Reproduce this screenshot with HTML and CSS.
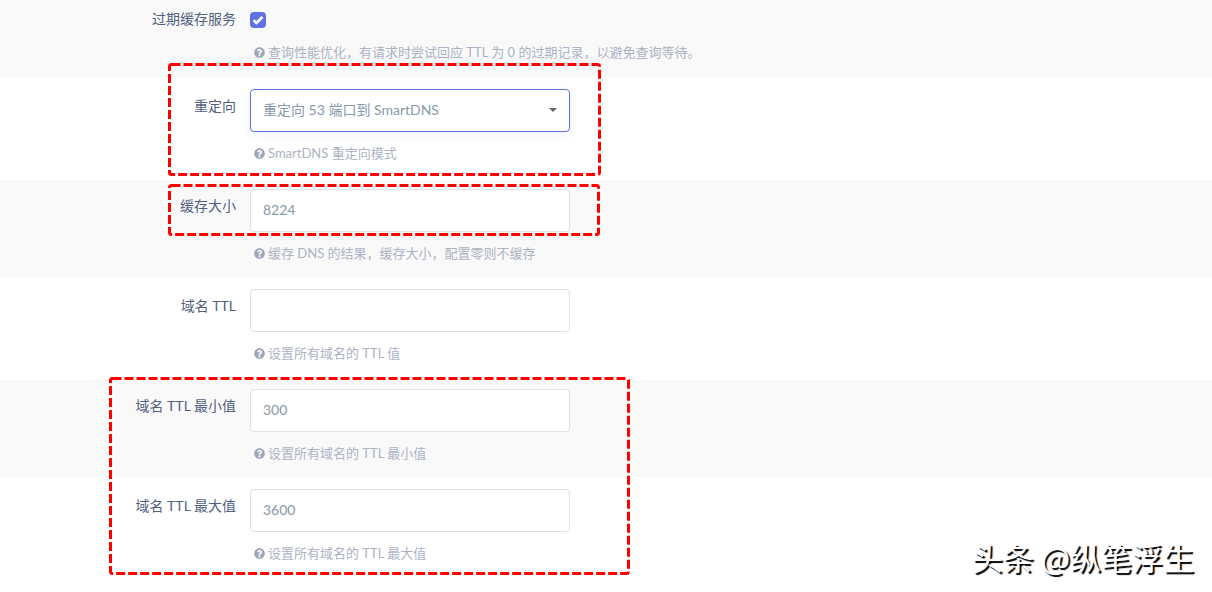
FILE: index.html
```
<!DOCTYPE html>
<html lang="zh-CN">
<head>
<meta charset="utf-8">
<title>SmartDNS</title>
<link rel="stylesheet" href="styles.css">
</head>
<body>
<svg class="sprite" aria-hidden="true">
  <symbol id="help" viewBox="0 0 512 512">
    <path fill="currentColor" d="M504 256c0 137-111 248-248 248S8 393 8 256 119 8 256 8s248 111 248 248zM262.700 90c-54.500 0-89.300 23-116.500 63.800-3.600 5.300-2.400 12.400 2.700 16.300l34.700 26.300c5.200 3.900 12.600 3 16.700-2.100 17.900-22.700 30.100-35.800 57.300-35.800 20.400 0 45.700 13.100 45.700 33 0 15-12.400 22.700-32.500 34C247.100 238.500 216 254.900 216 296v4c0 6.600 5.400 12 12 12h56c6.600 0 12-5.400 12-12v-1.300c0-28.500 83.200-29.600 83.200-106.700 0-58-60.200-102-116.500-102zM256 338c-25.400 0-46 20.600-46 46s20.600 46 46 46 46-20.600 46-46-20.600-46-46-46z"/>
  </symbol>
</svg>
<main class="page">
  <form class="form">
    <div class="row row-check">
      <label class="label" for="expired">过期缓存服务</label>
      <div class="field">
        <div class="check">
          <input class="check-input" type="checkbox" id="expired" checked>
          <svg class="check-mark" viewBox="0 0 16 16" aria-hidden="true"><path d="M3.600 8.200 6.500 11 12.400 5" fill="none" stroke="#fff" stroke-width="2.600"/></svg>
        </div>
        <p class="hint"><svg class="hint-icon" aria-hidden="true"><use href="#help"/></svg>查询性能优化，有请求时尝试回应 TTL 为 0 的过期记录，以避免查询等待。</p>
      </div>
    </div>
    <div class="row">
      <label class="label" for="redirect">重定向</label>
      <div class="field">
        <div class="select">
          <select class="control control-active" id="redirect"><option>重定向 53 端口到 SmartDNS</option></select>
          <svg class="select-arrow" viewBox="0 0 8 4" aria-hidden="true"><path d="M0 0h8L4 4z" fill="#666"/></svg>
        </div>
        <p class="hint"><svg class="hint-icon" aria-hidden="true"><use href="#help"/></svg>SmartDNS 重定向模式</p>
      </div>
    </div>
    <div class="row">
      <label class="label" for="cache">缓存大小</label>
      <div class="field">
        <input class="control" type="text" id="cache" value="8224">
        <p class="hint"><svg class="hint-icon" aria-hidden="true"><use href="#help"/></svg>缓存 DNS 的结果，缓存大小，配置零则不缓存</p>
      </div>
    </div>
    <div class="row">
      <label class="label" for="ttl">域名 TTL</label>
      <div class="field">
        <input class="control" type="text" id="ttl">
        <p class="hint"><svg class="hint-icon" aria-hidden="true"><use href="#help"/></svg>设置所有域名的 TTL 值</p>
      </div>
    </div>
    <div class="row">
      <label class="label" for="ttl-min">域名 TTL 最小值</label>
      <div class="field">
        <input class="control" type="text" id="ttl-min" value="300">
        <p class="hint"><svg class="hint-icon" aria-hidden="true"><use href="#help"/></svg>设置所有域名的 TTL 最小值</p>
      </div>
    </div>
    <div class="row">
      <label class="label" for="ttl-max">域名 TTL 最大值</label>
      <div class="field">
        <input class="control" type="text" id="ttl-max" value="3600">
        <p class="hint"><svg class="hint-icon" aria-hidden="true"><use href="#help"/></svg>设置所有域名的 TTL 最大值</p>
      </div>
    </div>
  </form>
  <svg class="marks" aria-hidden="true">
    <g fill="none" stroke="#f00" stroke-width="3" stroke-dasharray="9 3">
      <rect x="169.500" y="64.500" width="430" height="110" rx="2"/>
      <rect x="169.500" y="185.500" width="429" height="49" rx="2"/>
      <rect x="110.500" y="378.500" width="518" height="195" rx="2"/>
    </g>
  </svg>
  <div class="watermark">头条 @纵笔浮生</div>
</main>
</body>
</html>
```
FILE: styles.css
```
* { box-sizing: border-box; }

body {
  margin: 0;
  background: #fff;
  color: #525f7f;
  font-family: Lato, "Noto Sans CJK SC", sans-serif;
  font-size: 14px;
  font-weight: 400;
}

.sprite { position: absolute; width: 0; height: 0; }

.page { position: relative; min-height: 100vh; }

.row {
  display: flex;
  gap: 14px;
  padding: 12px 0;
}

.row:nth-child(odd) {
  padding: 9px 0;
  background: #f9f9f9;
}

.row.row-check { padding-bottom: 10px; }

.label {
  flex: 0 0 236px;
  padding-top: 7px;
  line-height: 20px;
  text-align: right;
}

.row-check .label { padding-top: 0; }

.field { flex: 1; min-width: 0; }

.control {
  display: block;
  width: 320px;
  height: 43px;
  padding: 0 12px 2px;
  appearance: none;
  border: 1px solid #dee2e6;
  border-radius: 4px;
  background: #fff;
  color: #8898aa;
  font: inherit;
}

.control-active {
  border-color: #5e72e4;
  box-shadow: 0 3px 9px rgba(50, 50, 200, 0.08);
}

.select { position: relative; width: 320px; }

.select-arrow {
  position: absolute;
  top: 19px;
  right: 13px;
  width: 8px;
  height: 4px;
  pointer-events: none;
}

.check {
  display: flex;
  position: relative;
  align-items: center;
  height: 22px;
}

.check-input {
  width: 16px;
  height: 16px;
  margin: 0;
  appearance: none;
  border-radius: 4px;
  background: #5e72e4;
}

.check-mark {
  position: absolute;
  left: 0;
  width: 16px;
  height: 16px;
  pointer-events: none;
}

.hint {
  display: flex;
  gap: 3px;
  align-items: center;
  margin: 11px 0 0;
  padding: 0 4px 5px;
  color: #adb3c4;
  font-size: 13px;
  line-height: 20px;
}

.hint-icon {
  flex: none;
  width: 11px;
  height: 11px;
  color: #a0a7bb;
}

.marks {
  position: absolute;
  inset: 0;
  width: 100%;
  height: 100%;
  pointer-events: none;
}

.watermark {
  position: absolute;
  right: 18px;
  bottom: 15px;
  color: #fff;
  font-family: "Noto Sans CJK SC", sans-serif;
  font-size: 31px;
  font-weight: 400;
  line-height: 40px;
  text-shadow: 2px 2px 1px #000;
}
```
